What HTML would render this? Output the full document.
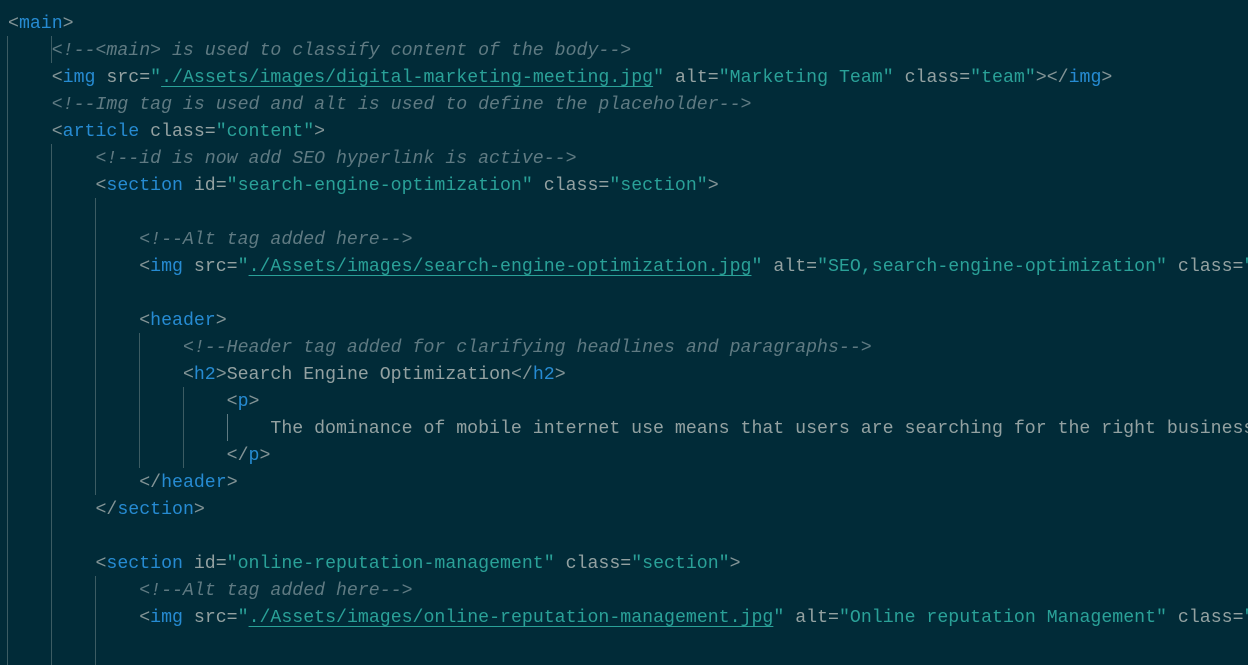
<!DOCTYPE html>
<html><head><meta charset="utf-8"><style>
html,body{margin:0;padding:0;background:#012b38;width:1248px;height:665px;overflow:hidden}
#w{position:absolute;left:0;top:3px;width:1248px;height:662px;overflow:hidden}
.l{position:absolute;left:8px;height:27px;line-height:27px;white-space:pre;font-family:"Liberation Mono",monospace;font-size:18.23px;color:#93a1a1}
.b{color:#839496}.t{color:#268bd2}.s{color:#2aa198}.u{color:#2aa198;text-decoration:underline;text-underline-offset:4px}
.c{color:#5f7a82;font-style:italic}
.g{position:absolute;width:1px;background:#3c5c63}
</style></head><body><div id="w">
<div class="g" style="left:7px;top:33px;height:640px"></div>
<div class="g" style="left:51px;top:33px;height:27px"></div>
<div class="g" style="left:51px;top:141px;height:530px"></div>
<div class="g" style="left:95px;top:195px;height:297px"></div>
<div class="g" style="left:95px;top:573px;height:100px"></div>
<div class="g" style="left:139px;top:330px;height:135px"></div>
<div class="g" style="left:183px;top:384px;height:81px"></div>
<div class="g" style="left:227px;top:411px;height:27px;background:#5f7a82"></div>

<div class="l" style="top:8px"><span class="b">&lt;</span><span class="t">main</span><span class="b">&gt;</span></div>
<div class="l" style="top:35px">    <span class="c">&lt;!--&lt;main&gt; is used to classify content of the body--&gt;</span></div>
<div class="l" style="top:62px">    <span class="b">&lt;</span><span class="t">img</span> src=<span class="s">"</span><span class="u">./Assets/images/digital-marketing-meeting.jpg</span><span class="s">"</span> alt=<span class="s">"Marketing Team"</span> class=<span class="s">"team"</span><span class="b">&gt;&lt;/</span><span class="t">img</span><span class="b">&gt;</span></div>
<div class="l" style="top:89px">    <span class="c">&lt;!--Img tag is used and alt is used to define the placeholder--&gt;</span></div>
<div class="l" style="top:116px">    <span class="b">&lt;</span><span class="t">article</span> class=<span class="s">"content"</span><span class="b">&gt;</span></div>
<div class="l" style="top:143px">        <span class="c">&lt;!--id is now add SEO hyperlink is active--&gt;</span></div>
<div class="l" style="top:170px">        <span class="b">&lt;</span><span class="t">section</span> id=<span class="s">"search-engine-optimization"</span> class=<span class="s">"section"</span><span class="b">&gt;</span></div>
<div class="l" style="top:224px">            <span class="c">&lt;!--Alt tag added here--&gt;</span></div>
<div class="l" style="top:251px">            <span class="b">&lt;</span><span class="t">img</span> src=<span class="s">"</span><span class="u">./Assets/images/search-engine-optimization.jpg</span><span class="s">"</span> alt=<span class="s">"SEO,search-engine-optimization"</span> class=<span class="s">"seo"</span></div>
<div class="l" style="top:305px">            <span class="b">&lt;</span><span class="t">header</span><span class="b">&gt;</span></div>
<div class="l" style="top:332px">                <span class="c">&lt;!--Header tag added for clarifying headlines and paragraphs--&gt;</span></div>
<div class="l" style="top:359px">                <span class="b">&lt;</span><span class="t">h2</span><span class="b">&gt;</span>Search Engine Optimization<span class="b">&lt;/</span><span class="t">h2</span><span class="b">&gt;</span></div>
<div class="l" style="top:386px">                    <span class="b">&lt;</span><span class="t">p</span><span class="b">&gt;</span></div>
<div class="l" style="top:413px">                        The dominance of mobile internet use means that users are searching for the right business</div>
<div class="l" style="top:440px">                    <span class="b">&lt;/</span><span class="t">p</span><span class="b">&gt;</span></div>
<div class="l" style="top:467px">            <span class="b">&lt;/</span><span class="t">header</span><span class="b">&gt;</span></div>
<div class="l" style="top:494px">        <span class="b">&lt;/</span><span class="t">section</span><span class="b">&gt;</span></div>
<div class="l" style="top:548px">        <span class="b">&lt;</span><span class="t">section</span> id=<span class="s">"online-reputation-management"</span> class=<span class="s">"section"</span><span class="b">&gt;</span></div>
<div class="l" style="top:575px">            <span class="c">&lt;!--Alt tag added here--&gt;</span></div>
<div class="l" style="top:602px">            <span class="b">&lt;</span><span class="t">img</span> src=<span class="s">"</span><span class="u">./Assets/images/online-reputation-management.jpg</span><span class="s">"</span> alt=<span class="s">"Online reputation Management"</span> class=<span class="s">"orm"</span></div>
</div></body></html>
